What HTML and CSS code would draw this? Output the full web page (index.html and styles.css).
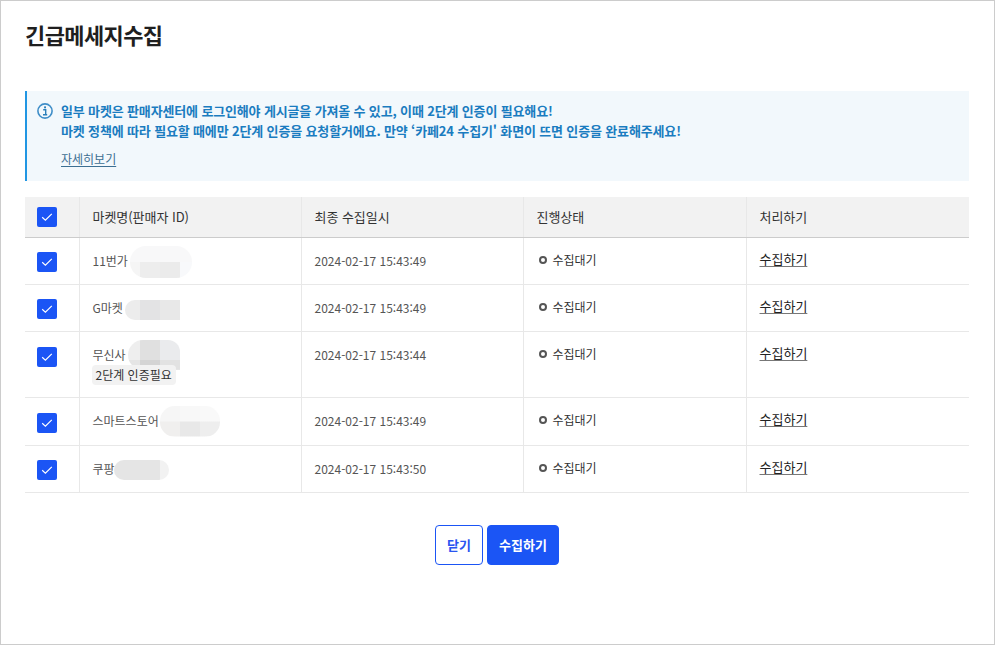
FILE: index.html
```html
<!DOCTYPE html>
<html lang="ko">
<head>
<meta charset="utf-8">
<title>긴급메세지수집</title>
<link rel="stylesheet" href="styles.css">
</head>
<body>
<main class="modal">
  <h1 class="title">긴급메세지수집</h1>
  <section class="notice">
    <svg class="notice-icon" width="16" height="16" viewBox="0 0 16 16" fill="none"><circle cx="8" cy="8" r="7.1" stroke="#3f8ec8" stroke-width="1.6"/><rect x="7.1" y="3.4" width="1.9" height="1.9" fill="#2b7fba"/><path d="M6.2 6.8H8.7V11.3M6 11.7H10.2" stroke="#2b7fba" stroke-width="1.4"/></svg>
    <div class="notice-body">
      <p class="notice-text">일부 마켓은 판매자센터에 로그인해야 게시글을 가져올 수 있고, 이때 2단계 인증이 필요해요!<br>마켓 정책에 따라 필요할 때에만 2단계 인증을 요청할거에요. 만약 ‘카페24 수집기' 화면이 뜨면 인증을 완료해주세요!</p>
      <a class="notice-link" href="#">자세히보기</a>
    </div>
  </section>
  <table class="grid">
    <colgroup><col class="c-check"><col class="c-a"><col class="c-a"><col class="c-b"><col class="c-b"></colgroup>
    <thead>
      <tr>
        <th class="check-cell"><span class="check"><svg width="12" height="10" viewBox="0 0 12 10" fill="none"><path d="M1.2 5.2L4.4 8.2L10.8 1.8" stroke="#fff" stroke-width="1.2"/></svg></span></th>
        <th>마켓명(판매자 ID)</th><th>최종 수집일시</th><th>진행상태</th><th>처리하기</th>
      </tr>
    </thead>
    <tbody>
      <tr class="r47">
        <td class="check-cell"><span class="check"><svg width="12" height="10" viewBox="0 0 12 10" fill="none"><path d="M1.2 5.2L4.4 8.2L10.8 1.8" stroke="#fff" stroke-width="1.2"/></svg></span></td>
        <td><div class="market"><span>11번가</span><i class="blur b1"></i></div></td>
        <td class="date">2024-02-17 15:43:49</td>
        <td><span class="status"><i class="dot"></i>수집대기</span></td>
        <td><a class="action" href="#">수집하기</a></td>
      </tr>
      <tr class="r47">
        <td class="check-cell"><span class="check"><svg width="12" height="10" viewBox="0 0 12 10" fill="none"><path d="M1.2 5.2L4.4 8.2L10.8 1.8" stroke="#fff" stroke-width="1.2"/></svg></span></td>
        <td><div class="market"><span>G마켓</span><i class="blur b2"></i></div></td>
        <td class="date">2024-02-17 15:43:49</td>
        <td><span class="status"><i class="dot"></i>수집대기</span></td>
        <td><a class="action" href="#">수집하기</a></td>
      </tr>
      <tr class="r66">
        <td class="check-cell"><span class="check"><svg width="12" height="10" viewBox="0 0 12 10" fill="none"><path d="M1.2 5.2L4.4 8.2L10.8 1.8" stroke="#fff" stroke-width="1.2"/></svg></span></td>
        <td><div class="market"><span>무신사</span><i class="blur b3"></i></div><span class="tag">2단계 인증필요</span></td>
        <td class="date">2024-02-17 15:43:44</td>
        <td><span class="status"><i class="dot"></i>수집대기</span></td>
        <td><a class="action" href="#">수집하기</a></td>
      </tr>
      <tr class="r48">
        <td class="check-cell"><span class="check"><svg width="12" height="10" viewBox="0 0 12 10" fill="none"><path d="M1.2 5.2L4.4 8.2L10.8 1.8" stroke="#fff" stroke-width="1.2"/></svg></span></td>
        <td><div class="market"><span>스마트스토어</span><i class="blur b4"></i></div></td>
        <td class="date">2024-02-17 15:43:49</td>
        <td><span class="status"><i class="dot"></i>수집대기</span></td>
        <td><a class="action" href="#">수집하기</a></td>
      </tr>
      <tr class="r47">
        <td class="check-cell"><span class="check"><svg width="12" height="10" viewBox="0 0 12 10" fill="none"><path d="M1.2 5.2L4.4 8.2L10.8 1.8" stroke="#fff" stroke-width="1.2"/></svg></span></td>
        <td><div class="market"><span>쿠팡</span><i class="blur b5"></i></div></td>
        <td class="date">2024-02-17 15:43:50</td>
        <td><span class="status"><i class="dot"></i>수집대기</span></td>
        <td><a class="action" href="#">수집하기</a></td>
      </tr>
    </tbody>
  </table>
  <div class="actions">
    <button class="btn btn-line" type="button">닫기</button>
    <button class="btn btn-solid" type="button">수집하기</button>
  </div>
</main>
</body>
</html>
```
FILE: styles.css
```css
* { box-sizing: border-box; }
html, body { margin: 0; padding: 0; background: #fff; }
body { font-family: "Noto Sans CJK KR", "Noto Sans", sans-serif; color: #333; }
.modal {
  width: 995px; height: 645px;
  border: 1px solid #ccc;
  padding: 17px 25px 0 24px;
}
.title { margin: 0; font-size: 22px; line-height: 32px; font-weight: 700; color: #1f1f1f; letter-spacing: -0.6px; }
.notice {
  margin-top: 41px; height: 90px;
  display: flex; gap: 8px;
  padding: 10px 12px 0 10px;
  background: #f2f8fc;
  border-left: 2px solid #2196e3;
}
.notice-icon { flex: none; margin-top: 2px; }
.notice-text { margin: 0; font-size: 13px; line-height: 20px; font-weight: 700; color: #1a7cc0; letter-spacing: -0.15px; }
.notice-link { display: inline-block; margin-top: 9px; font-size: 12px; line-height: 18px; color: #3c6f92; text-decoration: underline; text-underline-offset: 2px; }
.grid { margin-top: 16px; width: 944px; border-collapse: collapse; table-layout: fixed; }
.c-check { width: 54px; }
.c-a { width: 222px; }
.c-b { width: 223px; }
th { height: 40px; padding: 0 13px; background: #f2f2f2; border-bottom: 1px solid #ccc; border-left: 1px solid #e8e8e8; font-size: 13px; font-weight: 400; color: #333; text-align: left; letter-spacing: -0.05px; }
th:first-child, td:first-child { border-left: 0; }
td { padding: 13px 13px 0; vertical-align: top; border-bottom: 1px solid #e8e8e8; border-left: 1px solid #e8e8e8; font-size: 12px; line-height: 20px; color: #555; }
.r47 { height: 47px; }
.r48 { height: 48px; }
.r66 { height: 66px; }
.check-cell { padding: 14px 0 0 12px; }
th.check-cell { padding-top: 0; vertical-align: middle; }
.r66 .check-cell, .r48 .check-cell { padding-top: 15px; }
.check { display: flex; align-items: center; justify-content: center; width: 20px; height: 20px; border-radius: 2px; background: #1b55f5; }
.market { height: 20px; display: flex; align-items: flex-start; font-size: 12px; white-space: nowrap; }
.blur { display: block; flex: none; background-repeat: no-repeat; background-size: 100% 50%, 100% 50%; background-position: top, bottom; }
.b1 { width: 62px; height: 32px; margin: -5px 0 0 2px; border-radius: 16px; background-image:
  linear-gradient(90deg, #f8f8f9 0 100%),
  linear-gradient(90deg, #f5f5f5 0 10px, #ededed 10px 30px, #ebebeb 30px 50px, #f8f9fb 50px); }
.b2 { width: 55px; height: 20px; margin: 2px 0 0 2px; border-radius: 10px 0 0 10px; background-image:
  linear-gradient(90deg, #ececec 0 15px, #e3e3e4 15px 35px, #e8e8e8 35px),
  linear-gradient(90deg, #ececec 0 15px, #e3e3e4 15px 35px, #e8e8e8 35px); }
.b3 { width: 52px; height: 30px; margin: -5px 0 0 2px; border-radius: 15px 12px 0 15px; background-size: 100% 67%, 100% 33%; background-image:
  linear-gradient(90deg, #eeeeee 0 12px, #e0e0e0 12px 32px, #eaebed 32px),
  linear-gradient(90deg, #e5e5e5 0 12px, #d4d4d4 12px 32px, #e2e2e2 32px); }
.b4 { width: 60px; height: 31px; margin: -5px 0 0 1px; border-radius: 15px; background-image:
  linear-gradient(90deg, #f6f6f6 0 20px, #f8f8f8 20px 40px, #f9f9f9 40px),
  linear-gradient(90deg, #f0efee 0 20px, #e8e8e8 20px 40px, #eeeeee 40px); }
.b5 { width: 55px; height: 20px; margin: 1px 0 0 -1px; border-radius: 10px; background-image:
  linear-gradient(90deg, #e5e5e5 0 46px, #f2f2f2 46px),
  linear-gradient(90deg, #e5e5e5 0 46px, #f2f2f2 46px); }
.tag { display: inline-block; margin: 0 0 0 -1px; padding: 0 4px; height: 20px; line-height: 20px; border-radius: 4px; background: #f2f2f2; font-size: 12px; color: #333; }
.date { color: #555; font-size: 12px; font-kerning: none; font-variant-ligatures: none; }
.status { display: flex; align-items: center; gap: 6px; font-size: 12px; color: #333; margin-top: -1px; }
.dot { width: 8px; height: 8px; border-radius: 50%; border: 2px solid #555; margin-left: 2px; }
.action { display: block; margin-top: -2px; color: #222; font-size: 13px; text-decoration: underline; text-decoration-color: #777; text-underline-offset: 2px; }
.actions { display: flex; justify-content: center; gap: 4px; margin-top: 32px; }
.btn { height: 40px; border-radius: 4px; font: 700 13px "Noto Sans CJK KR", sans-serif; padding: 0; }
.btn-line { width: 48px; background: #fff; color: #2a55f0; border: 1px solid #1b55f5; }
.btn-solid { width: 72px; background: #1b55f5; color: #fff; border: 1px solid #1b55f5; }
```
